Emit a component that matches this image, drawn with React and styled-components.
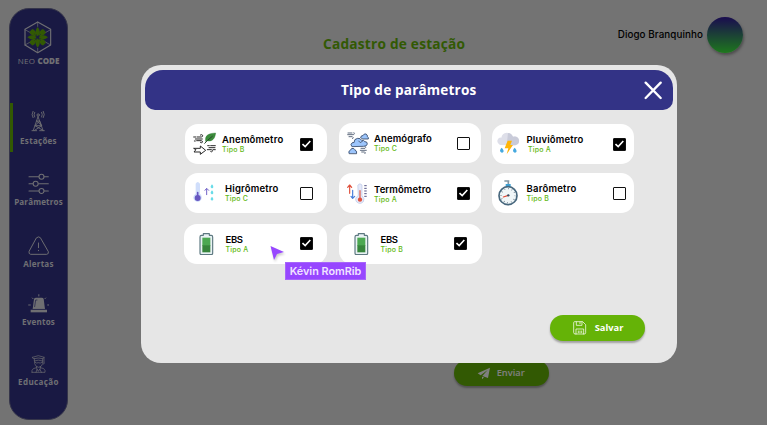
import React from "react";
import styled, { createGlobalStyle } from "styled-components";

const GlobalStyle = createGlobalStyle`
  * { box-sizing: border-box; }
  body { margin: 0; background: #e6e6e6; font-family: "Open Sans", "Noto Sans", sans-serif; }
`;
const Screen = styled.div`
  position: relative; width: 767px; height: 425px; overflow: hidden;
  display: flex; padding: 8px 24px 0 9px; background: #e6e6e6;
`;
const Sidebar = styled.nav`
  width: 59px; height: 412px; flex: none; border: 1px solid #6b6b94; border-radius: 20px;
  background: #333386; color: #dedee5; display: flex; flex-direction: column; align-items: center;
`;
const Brand = styled.div`
  height: 94px; padding-top: 12px; display: flex; flex-direction: column; align-items: center;
`;
const BrandName = styled.div`
  margin-top: 2px; font: 400 8px/10px "Open Sans", sans-serif; letter-spacing: .25px; white-space: nowrap;
  b { font-weight: 800; letter-spacing: 0; }
`;
const NavItem = styled.div`
  width: 57px; height: ${p => p.$h}px; flex: none; display: flex; flex-direction: column; align-items: center;
  svg { margin-top: ${p => p.$top}px; flex: none; }
  background: ${p => p.$active ? "linear-gradient(#65b307,#65b307) 0 0 / 3px 49px no-repeat" : "none"};
`;
const NavLabel = styled.span`
  margin-top: ${p => p.$gap}px; font-weight: 700; font-size: 8px; line-height: 10px;
  letter-spacing: ${p => p.$ls || 0}px; white-space: nowrap;
`;
const Main = styled.main`flex: 1; display: flex; flex-direction: column;`;
const TopBar = styled.header`
  height: 55px; padding-top: 9px; display: flex; align-items: flex-start; justify-content: flex-end; gap: 4px;
`;
const UserName = styled.span`
  font: 500 9.8px/14px Inter, sans-serif; margin-top: 11px; color: #000; letter-spacing: .09px;
`;
const Avatar = styled.div`
  width: 36px; height: 36px; border-radius: 50%; background: linear-gradient(#34189f, #3cf03a);
  box-shadow: 1px 2px 3px rgba(0,0,0,.35);
`;
const PageTitle = styled.h1`
  margin: -28px 0 0 255px; width: 150px; white-space: nowrap; font-weight: 700; font-size: 13.7px; line-height: 18px; color: #65b307; letter-spacing: .22px;
`;
const Button = styled.button`
  width: 95px; height: 26px; padding: 0 0 0 23px; border: 0; border-radius: 13px; flex: none;
  display: flex; align-items: center; gap: ${p => p.$gap}px; background: #65b307; color: #fff;
  font: ${p => p.$weight || 700} 9.3px/14px "Open Sans", sans-serif; box-shadow: 0 2px 2px rgba(0,0,0,.3);
`;
const SendRow = styled.div`margin: 307px 0 0 386px;`;
const Overlay = styled.div`
  position: absolute; inset: 0; padding: 65px 0 0 141px; background: rgba(0,0,0,.5);
`;
const Modal = styled.section`
  width: 536px; height: 298px; padding: 5px 4px 0; border-radius: 20px; background: #e6e6e6;
  display: flex; flex-direction: column;
`;
const ModalHeader = styled.header`
  height: 40px; flex: none; border-radius: 18px 18px 10px 10px; background: #333386; color: #fff;
  display: flex; align-items: center; justify-content: space-between; padding: 0 11px 0 196px;
`;
const ModalTitle = styled.h2`margin: 0; font-weight: 700; font-size: 13.6px; line-height: 18px; letter-spacing: .16px; white-space: nowrap;`;
const Grid = styled.div`
  height: 190px; padding: 14px 0 0 40px; display: grid; grid-template-columns: 154px 153px 143px;
  grid-template-rows: 50px 50px 40px; align-items: start;
`;
const Card = styled.article`
  width: ${p => p.$w || 142}px; height: 40px; margin: ${p => p.$dy || 0}px 0 0 ${p => p.$dx || 0}px;
  border-radius: 13px; background: #fff; display: flex; align-items: center; padding-right: 14px;
`;
const IconSlot = styled.div`
  width: ${p => p.$w}px; padding-left: ${p => p.$pad}px; height: 40px; padding-top: ${p => p.$top}px; flex: none;
  svg { display: block; }
`;
const Copy = styled.div`flex: 1; min-width: 0; margin-top: ${p => p.$shift}px; font-family: Inter, sans-serif;`;
const Name = styled.div`
  font-weight: 600; font-size: 9.5px; line-height: 11px; color: #000; letter-spacing: ${p => p.$ls}px; white-space: nowrap;
`;
const Kind = styled.div`
  font-weight: 500; font-size: 7px; line-height: 9px; color: #5fb812;
  margin-left: ${p => p.$dx || 0}px; letter-spacing: .2px;
`;
const Check = styled.div`
  width: 13px; height: 13px; flex: none; border-radius: 1px; margin-right: ${p => p.$mr || 0}px;
  margin-top: ${p => p.$up || 0}px;
  border: 1.5px solid #111; background: ${p => p.$on ? "#000" : "#fff"}; display: grid; place-items: center;
  svg { display: block; }
`;
const Footer = styled.footer`margin-left: 405px; padding-top: 15px;`;
const Cursor = styled.div`position: absolute; left: 269px; top: 244px; svg { display: block; filter: drop-shadow(1px 2px 1px #0003); }`;
const CursorTag = styled.div`
  position: absolute; left: 16px; top: 18px; width: 81px; height: 18px; background: #9747ff; color: #f1e4ff;
  border: 1px solid #a765fa; font: 600 10.8px/17px Inter, sans-serif; text-align: center; white-space: nowrap; letter-spacing: 0;
`;

function Svg({ box, children, ...rest }) {
  const [, , w, h] = box.split(" ").map(Number);
  return <svg width={w / 3} height={h / 3} viewBox={box} fill="none" strokeLinecap="round" strokeLinejoin="round" {...rest}>{children}</svg>;
}

const Logo = () => (
  <Svg box="73 62 84 98" stroke="#dedee5" strokeWidth="3.400">
    <path d="M114 65 L153 87 V134 L114 157 L76 134 V87Z" />
    <path d="M114 65V78M76 88l16 9M153 88l-16 9M76 134l16-9M153 134l-16-9M114 157v-13" strokeWidth="2" />
    <g fill="#65b307" stroke="none">
      {[0, 90, 180, 270].map(r => <path key={r} transform={`rotate(${r} 114 111)`} d="M114 108Q101 94 114 80Q127 94 114 108Z" />)}
      {[45, 135, 225, 315].map(r => <path key={r} transform={`rotate(${r} 114 111)`} d="M114 107Q102 92 108 82H120Q126 92 114 107Z" />)}
    </g>
    <path d="M105 102l18 18M123 102l-18 18" stroke="#333386" strokeWidth="1.500" />
  </Svg>
);
const Tower = () => (
  <Svg box="94 330 44 66" stroke="currentColor" strokeWidth="2.600">
    <path d="M115 350L101 391M115 350L130 391M97 392h14M120 392h14M111 363h9l-14 14h20l-21 14M120 363l6 14M111 363l15 14M106 377l24 14M105 337q-4 7 0 14M126 337q4 7 0 14M100 334q-6 10 0 19M131 334q6 10 0 19" />
    <circle cx="115.500" cy="345" r="3.500" />
  </Svg>
);
const Sliders = () => (
  <Svg box="84 68 64 64" stroke="currentColor" strokeWidth="3.200">
    <path d="M87 79h29M133 79h12M87 100h11M116 100h29M87 122h29M133 122h12" />
    <circle cx="124.500" cy="79" r="7.500" /><circle cx="107" cy="100" r="7.500" /><circle cx="124.500" cy="122" r="7.500" />
  </Svg>
);
const Warning = () => (
  <Svg box="84 256 64 58" stroke="currentColor" strokeWidth="2.900">
    <path d="M110 261q6-5 11 0l24 42q2 7-5 8H92q-7-1-5-8ZM115.500 277v14M115.500 299v1" />
  </Svg>
);
const Siren = () => (
  <Svg box="83 25 65 57" stroke="currentColor" strokeWidth="2.800">
    <path d="M97 70L101 40Q102 36 108 36H124Q129 36 130 40L134 70Z" fill="currentColor" stroke="none" />
    <path d="M103 63l3-20h4" stroke="#333386" strokeWidth="2" />
    <path d="M91 72h49v8H91Z" fill="currentColor" stroke="none" />
    <path d="M92 71h47" stroke="#333386" strokeWidth="1" />
    <path d="M115.500 27v4M96 37l2 2M136 37l-2 2M85 58h2M89 58h1M142 58h3" />
  </Svg>
);
const Student = () => (
  <Svg box="94 208 45 54" stroke="currentColor" strokeWidth="2">
    <path d="M98 215L116 210L134 215L129 219Q116 215 104 219ZM104 219v7q12-5 25 0v-7M133 216v15M131 235l3-2M105 226v8q3 10 12 11q9-1 12-11v-8M106 230q5 4 10 1q5 3 12-1M111 243v5l5 9l6-9v-5M97 260v-6q1-6 13-8M122 246q13 1 14 8v6H97M112 251l-3 9M121 251l4 9" />
  </Svg>
);
const Wind = () => (
  <Svg box="38 50 72 70" stroke="#222" strokeWidth="2.900">
    <path d="M40 65h7M51 65h12q5-1 4-5q-3-4-7-1M45 71h21M42 77h3M49 76h14q5 1 3 5q-3 3-6 0M41 99h19v-7l16 13-16 12v-7H41l5-6ZM82 91h5M91 91h14M86 97h18M81 103h12q5 2 3 5q-3 3-5 1M98 103h7" />
    <path d="M76 78C72 58 88 54 106 53C104 70 96 81 78 76Z" fill="#3b8b3b" stroke="#26772e" strokeWidth="1" />
    <path d="M73 84q7-9 23-21" stroke="#26442a" />
  </Svg>
);
const Clouds = () => (
  <Svg box="35 50 68 71" stroke="#354969" strokeWidth="2.600">
    <path d="M76 69q2-7 7-5q3-7 9-5q5 2 4 8q5 2 3 7H84Z" fill="#9cc5fc" />
    <path d="M49 96q-5-6 1-10q3-3 6-1q0-12 11-13q8-1 12 6q7-2 9 4q8-1 8 7q-1 7-10 7Z" fill="#9cc5fc" />
    <path d="M41 117q-3-7 4-9q3-9 11-5q3 2 3 5q7 1 5 9Z" fill="#9cc5fc" />
    <path d="M38 56h12M37 61h18q4-2 1-6M41 67h10q5 2 1 6M77 102h12q4-2 1-5M75 108h18M79 113h9q4 2 1 5M70 80l5 5l7-5" stroke="#46536b" />
  </Svg>
);
const Rain = () => (
  <Svg box="27 52 68 68">
    <path d="M36 91Q25 85 29 75Q32 68 40 69Q42 55 56 54Q70 54 75 66Q90 63 93 76Q95 88 82 92Z" fill="#dedfe9" />
    <path d="M60 55Q70 56 75 66Q90 63 93 76Q95 88 82 92H56Z" fill="#c9cbd9" />
    <path d="M59 78H72L67 91H75L56 119L61 101H50Z" fill="#ffb508" />
    {[[41, 99], [80, 99]].map(([x, y]) => <path key={x} d={`M${x} ${y}q-8 8-3 13q4 4 8 0q3-5-5-13Z`} fill="#45a9df" />)}
  </Svg>
);
const Humidity = () => (
  <Svg box="40 202 64 66">
    <path d="M48 210q6-10 13 0v30q9 9 3 19q-9 11-20 1q-8-11 4-20Z" fill="#d0defb" />
    <circle cx="54" cy="253" r="9" fill="#6757c1" /><path d="M54 237v16" stroke="#6757c1" strokeWidth="5" />
    <path d="M81 243v-17M76 230l5-6l6 6" stroke="#7162c8" strokeWidth="3" />
    {[[97, 212], [97, 230], [97, 249]].map(([x, y]) => <path key={y} d={`M${x} ${y}q-7 8-2 11q5 2 6-3q0-4-4-8Z`} fill="#68dce9" />)}
  </Svg>
);
const Thermo = () => (
  <Svg box="36 201 62 68" strokeWidth="3.500">
    <path d="M44 235v-22M38 217l6-7l6 7" stroke="#df503c" />
    <path d="M53 226v23M48 244l5 6l6-6" stroke="#477edb" />
    <path d="M69 210q6-8 12 0v32q10 9 4 18q-9 10-20 1q-8-11 4-19Z" fill="#e4e9f9" stroke="#b9c5e5" strokeWidth="2" />
    <path d="M75 227v24" stroke="#df513e" /><circle cx="75" cy="254" r="6.500" fill="#df513e" />
    <path d="M89 212h5M89 220h5M89 228h5M89 236h5M89 244h5" stroke="#34346f" strokeWidth="2.500" />
  </Svg>
);
const Gauge = () => (
  <Svg box="27 193 66 81">
    <path d="M49 199h15M61 198v10" stroke="#8196a3" strokeWidth="5" strokeLinecap="butt" /><path d="M53 208h15v9H53Z" fill="#3da0d3" />
    <circle cx="60" cy="243" r="27" fill="#f0f6f8" stroke="#47677d" strokeWidth="5" />
    <circle cx="60" cy="243" r="21" stroke="#31495a" strokeWidth="4" strokeDasharray="1.500 9.490" strokeLinecap="butt" />
    <path d="M46 247l15-5" stroke="#e04a37" strokeWidth="3.500" /><circle cx="61" cy="242" r="3.500" fill="#334b61" />
  </Svg>
);
const Battery = () => (
  <Svg box="56 68 45 68">
    <path d="M69 70h18v5h6q4 0 4 5v49q0 4-4 4H63q-4 0-4-4V80q0-5 4-5h6Z" fill="#e9f2f4" stroke="#5d7880" strokeWidth="3.500" />
    <path d="M66 82h24v25H66Z" fill="#4ca852" /><path d="M66 105h24v21H66Z" fill="#37853c" />
  </Svg>
);
const Floppy = () => (
  <Svg box="399 62 41 41" stroke="#fff" strokeWidth="2.200">
    <path d="M401 66q0-2 3-2h24l9 9v24q0 4-4 4h-28q-4 0-4-4ZM409 65v10h17V65M420 65v5M408 101V86h23v15M415 92v5M420 92v5M425 92v5" />
  </Svg>
);
const Plane = () => (
  <Svg box="108 201 41 37"><path d="M147 203L110 220L119 226L140 210L124 228L141 234ZM123 230v8l6-6Z" fill="#fff" /></Svg>
);

const parameters = [
  { name: "Anemômetro", kind: "Tipo B", Icon: Wind, on: true, slot: 37, pad: 7.700, top: 7.500, ls: .18, shift: 0 },
  { name: "Anemógrafo", kind: "Tipo C", Icon: Clouds, slot: 35, pad: 7.700, top: 8, ls: .1, dy: -1, shift: 0, mr: -3, up: 1 },
  { name: "Pluviômetro", kind: "Tipo A", Icon: Rain, on: true, slot: 34.500, pad: 5, top: 8.300, ls: .17, kdx: 1.500, shift: 0, mr: -6 },
  { name: "Higrômetro", kind: "Tipo C", Icon: Humidity, slot: 40, pad: 8.300, top: 8.300, ls: .18, shift: 0, dy: -1 },
  { name: "Termômetro", kind: "Tipo A", Icon: Thermo, on: true, slot: 35, pad: 8, top: 9, ls: .1, dy: -1, shift: 2, mr: -3 },
  { name: "Barômetro", kind: "Tipo B", Icon: Gauge, slot: 34.500, pad: 5, top: 6.300, ls: .22, dy: -1, shift: 0, mr: -6 },
  { name: "EBS", kind: "Tipo A", Icon: Battery, on: true, slot: 41.500, pad: 14.700, top: 8.600, ls: -.35, dx: -1, w: 143, shift: 0, up: -2 },
  { name: "EBS", kind: "Tipo B", Icon: Battery, on: true, slot: 41.500, pad: 14.700, top: 8.600, ls: -.35, w: 143, shift: 0, mr: 1, up: -2 },
];

export default function App() {
  return (
    <>
      <GlobalStyle />
      <Screen>
        <Sidebar>
          <Brand><Logo /><BrandName>NEO <b>CODE</b></BrandName></Brand>
          <NavItem $h={66} $top={7} $active><Tower /><NavLabel $gap={4} $ls={.28}>Estações</NavLabel></NavItem>
          <NavItem $h={67} $top={4}><Sliders /><NavLabel $gap={3} $ls={.18}>Parâmetros</NavLabel></NavItem>
          <NavItem $h={58} $top={0}><Warning /><NavLabel $gap={4} $ls={.25}>Alertas</NavLabel></NavItem>
          <NavItem $h={61} $top={0}><Siren /><NavLabel $gap={4} $ls={.25}>Eventos</NavLabel></NavItem>
          <NavItem $h={60} $top={0}><Student /><NavLabel $gap={3.500} $ls={.4}>Educação</NavLabel></NavItem>
        </Sidebar>
        <Main>
          <TopBar><UserName>Diogo Branquinho</UserName><Avatar /></TopBar>
          <PageTitle>Cadastro de estação</PageTitle>
          <SendRow><Button $gap={6} $weight={600}><Plane />Enviar</Button></SendRow>
        </Main>
        <Overlay>
          <Modal role="dialog">
            <ModalHeader>
              <ModalTitle>Tipo de parâmetros</ModalTitle>
              <Svg box="252 243 55 57" stroke="#fff" strokeWidth="7"><path d="M257 248l45 46M302 248l-45 46" /></Svg>
            </ModalHeader>
            <Grid>
              {parameters.map(({ Icon, ...p }, i) => (
                <Card key={i} $w={p.w} $dx={p.dx} $dy={p.dy}>
                  <IconSlot $w={p.slot} $pad={p.pad} $top={p.top}><Icon /></IconSlot>
                  <Copy $shift={p.shift || 0}><Name $ls={p.ls}>{p.name}</Name><Kind $dx={p.kdx}>{p.kind}</Kind></Copy>
                  <Check $on={p.on} $mr={p.mr} $up={p.up}>
                    {p.on && <svg width="9" height="8" viewBox="0 0 9 8" fill="none" stroke="#fff" strokeWidth="1.6"><path d="M.5 4L3.200 6.500L8.300 1" /></svg>}
                  </Check>
                </Card>
              ))}
            </Grid>
            <Footer><Button $gap={8}><Floppy />Salvar</Button></Footer>
          </Modal>
        </Overlay>
        <Cursor>
          <svg width="17" height="17" viewBox="0 0 17 17"><path d="M1.500 2L15 8L8 10L5 16Z" fill="#9747ff" /></svg>
          <CursorTag>Kévin RomRib</CursorTag>
        </Cursor>
      </Screen>
    </>
  );
}
